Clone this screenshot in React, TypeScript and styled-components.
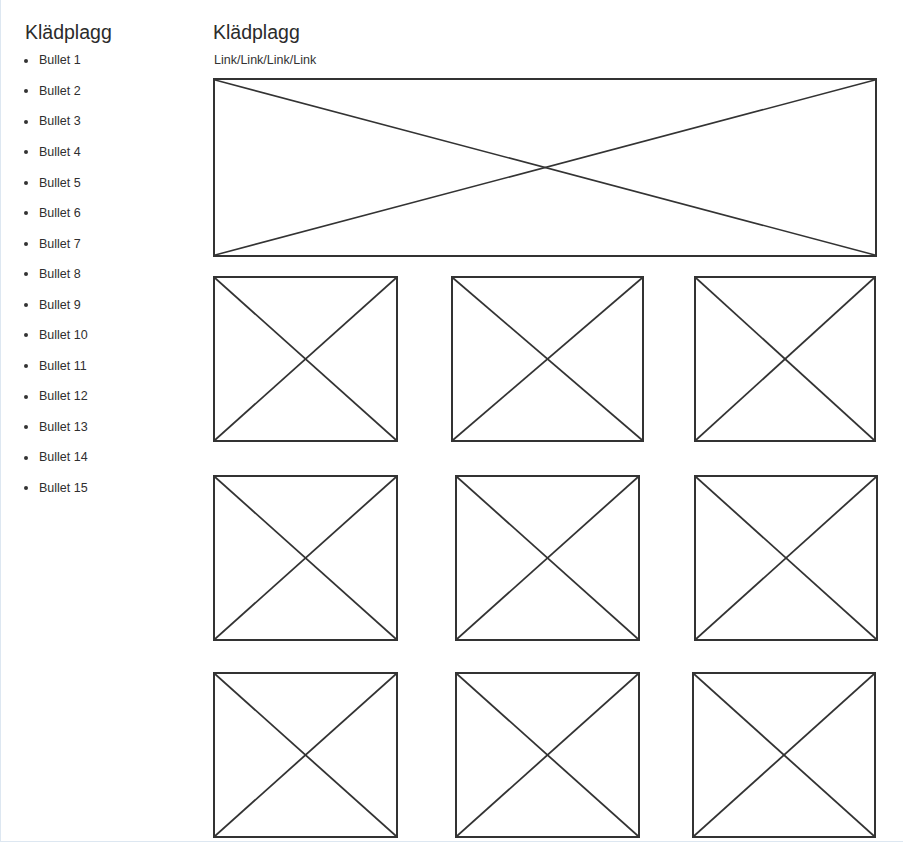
import React from "react";
import styled, { createGlobalStyle } from "styled-components";

const GlobalStyle = createGlobalStyle`
  html, body {
    margin: 0;
    padding: 0;
    background: #ffffff;
  }
  body {
    font-family: "Liberation Sans", Arial, sans-serif;
    color: #333333;
  }
`;

const Page = styled.div`
  box-sizing: border-box;
  width: 903px;
  height: 842px;
  display: flex;
  border-left: 1px solid #dde7f1;
  border-bottom: 1px solid #dde7f1;
  overflow: hidden;
`;

const Sidebar = styled.aside`
  width: 212px;
  box-sizing: border-box;
  padding: 20px 0 0 23px;
  display: flex;
  flex-direction: column;
`;

const Main = styled.main`
  flex: 1;
  padding-top: 20px;
  display: flex;
  flex-direction: column;
`;

const Title = styled.h1`
  margin: 0;
  font-size: 19.5px;
  line-height: 24px;
  font-weight: normal;
  color: #2b2b2b;
`;

const SideTitle = styled(Title)`
  margin-left: 1px;
`;

const BulletList = styled.ul`
  list-style: none;
  margin: 1.4px 0 0 0;
  padding: 0;
`;

const BulletItem = styled.li`
  display: flex;
  align-items: center;
  gap: 11px;
  height: 30.54px;
  font-size: 12.5px;
  line-height: 30.54px;
  color: #2f2f2f;
`;

const Dot = styled.span`
  width: 4px;
  height: 4px;
  border-radius: 50%;
  background: #333333;
  flex: none;
`;

const Breadcrumb = styled.div`
  margin-top: 9px;
  font-size: 12.5px;
  line-height: 15px;
  color: #333333;
  padding-left: 1px;
`;

const Placeholder = styled.div<{ $w: number; $h: number; $ml?: number }>`
  box-sizing: border-box;
  width: ${(p) => p.$w}px;
  height: ${(p) => p.$h}px;
  margin-left: ${(p) => p.$ml ?? 0}px;
  border: 2px solid #333333;
  flex: none;
  svg {
    display: block;
    width: 100%;
    height: 100%;
  }
`;

const Banner = styled.div`
  margin-top: 10px;
`;

const TileRow = styled.div<{ $mt: number }>`
  display: flex;
  margin-top: ${(p) => p.$mt}px;
`;

const Cross: React.FC<{ sw?: number }> = ({ sw = 1.8 }) => (
  <svg>
    <line x1="0" y1="0" x2="100%" y2="100%" stroke="#333" strokeWidth={sw} />
    <line x1="0" y1="100%" x2="100%" y2="0" stroke="#333" strokeWidth={sw} />
  </svg>
);

const bullets = Array.from({ length: 15 }, (_, i) => `Bullet ${i + 1}`);

type Tile = { w: number; ml: number };
const rows: { mt: number; tiles: Tile[] }[] = [
  {
    mt: 19,
    tiles: [
      { w: 185, ml: 0 },
      { w: 193, ml: 53 },
      { w: 182, ml: 50 },
    ],
  },
  {
    mt: 33,
    tiles: [
      { w: 185, ml: 0 },
      { w: 185, ml: 57 },
      { w: 184, ml: 54 },
    ],
  },
  {
    mt: 31,
    tiles: [
      { w: 185, ml: 0 },
      { w: 185, ml: 57 },
      { w: 184, ml: 52 },
    ],
  },
];

export default function App() {
  return (
    <>
      <GlobalStyle />
      <Page>
        <Sidebar>
          <SideTitle>Klädplagg</SideTitle>
          <BulletList>
            {bullets.map((b) => (
              <BulletItem key={b}>
                <Dot />
                {b}
              </BulletItem>
            ))}
          </BulletList>
        </Sidebar>
        <Main>
          <Title>Klädplagg</Title>
          <Breadcrumb>Link/Link/Link/Link</Breadcrumb>
          <Banner>
            <Placeholder $w={664} $h={179}>
              <Cross sw={1.6} />
            </Placeholder>
          </Banner>
          {rows.map((row, ri) => (
            <TileRow key={ri} $mt={row.mt}>
              {row.tiles.map((t, ti) => (
                <Placeholder key={ti} $w={t.w} $h={166} $ml={t.ml}>
                  <Cross />
                </Placeholder>
              ))}
            </TileRow>
          ))}
        </Main>
      </Page>
    </>
  );
}
